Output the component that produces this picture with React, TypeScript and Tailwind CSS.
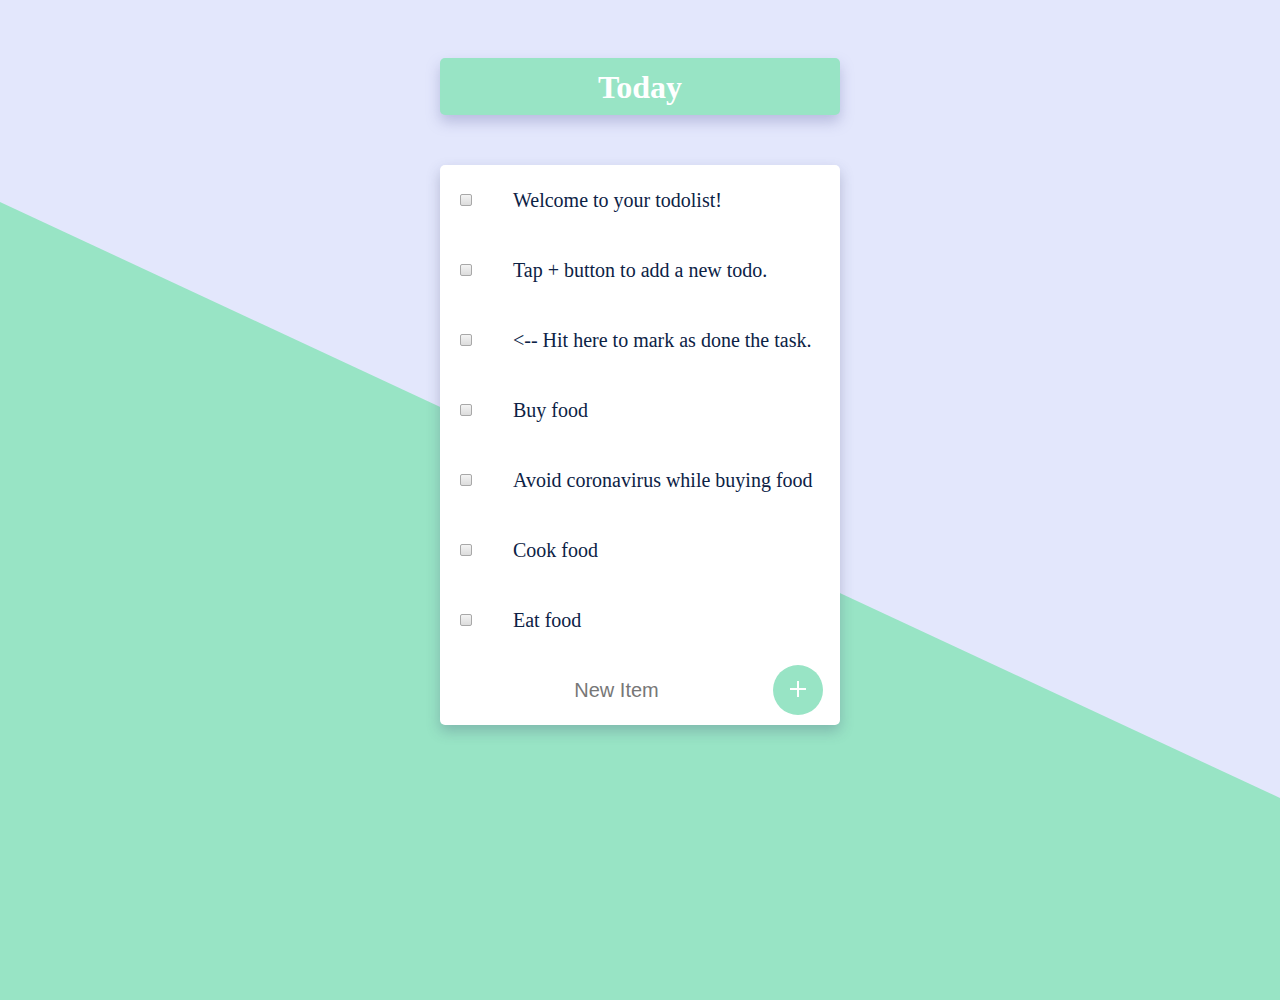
const todos = [
  "Welcome to your todolist!",
  "Tap + button to add a new todo.",
  "<-- Hit here to mark as done the task.",
  "Buy food",
  "Avoid coronavirus while buying food",
  "Cook food",
  "Eat food",
];

const App = () => {
  return (
    <section className="relative min-h-screen h-[1000px] overflow-hidden bg-[#e3e7fc] font-['Liberation_Serif',serif]">
      <div className="absolute inset-0 bg-[#98e4c5] [clip-path:polygon(0_202px,100%_798px,100%_100%,0_100%)]" />
      <div className="relative flex flex-col items-center pt-[58px]">
        <div className="w-[400px] h-[57px] flex items-center justify-center rounded-[5px] bg-[#98e4c5] shadow-[0_7px_14px_rgba(120,125,180,0.4)]">
          <h1 className="text-white font-bold text-[32px] leading-none">Today</h1>
        </div>
        <div className="mt-[50px] w-[400px] rounded-[5px] bg-white shadow-[0_6px_14px_rgba(60,70,110,0.28)]">
          {todos.map((t) => (
            <div key={t} className="h-[70px] flex items-center">
              <input
                type="checkbox"
                className="ml-[20px] w-[12px] h-[12px] appearance-none rounded-[2px] border border-[#a8a8a8] bg-gradient-to-b from-[#f4f4f4] to-[#dcdcdc] shrink-0"
              />
              <p className="ml-[41px] text-[20px] text-[#0c2245] whitespace-nowrap">{t}</p>
            </div>
          ))}
          <div className="h-[70px] flex items-center">
            <input
              type="text"
              placeholder="New Item"
              className="flex-1 min-w-0 text-center text-[20px] font-['Liberation_Sans',sans-serif] text-[#333] placeholder:text-[#777] outline-none bg-transparent pl-[20px]"
            />
            <button className="mr-[17px] w-[50px] h-[50px] rounded-full bg-[#98e4c5] text-white flex items-center justify-center shrink-0 pb-[3px]">
              <svg width="16" height="16" viewBox="0 0 16 16">
                <path d="M8 0v16M0 8h16" stroke="white" strokeWidth="2" />
              </svg>
            </button>
          </div>
        </div>
      </div>
    </section>
  );
};

export default App;
